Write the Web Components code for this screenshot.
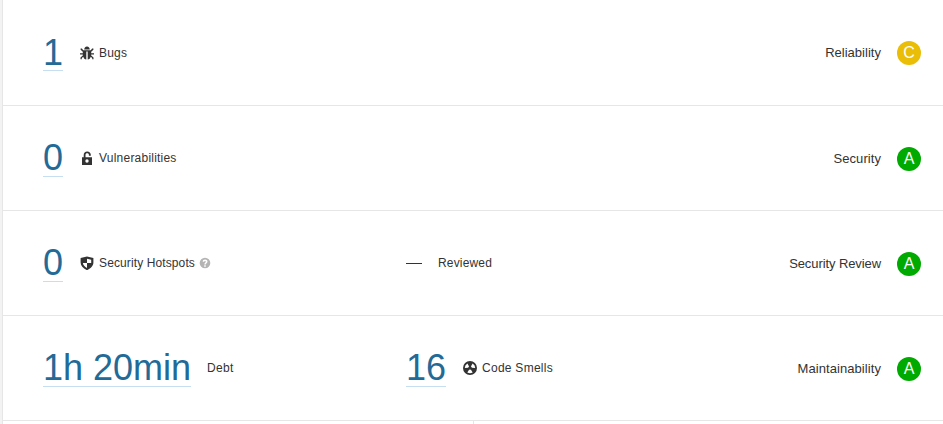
<!DOCTYPE html>
<html lang="en"><head><meta charset="utf-8"><title>Overview</title>
<style>html,body{margin:0;height:100%;overflow:hidden;background:#fff}body{font-family:"Liberation Sans",Arial,sans-serif;color:#333}</style></head>
<body><overview-panel></overview-panel>
<script>
const define=(name,markup)=>{const t=document.createElement('template');t.innerHTML=markup;
customElements.define(name,class extends HTMLElement{constructor(){super();this.attachShadow({mode:'open'}).append(t.content.cloneNode(true));}});};
const icons={
bug:'<path d="M4.2 3.6C4.2 1.7 5.3.4 7 .4s2.8 1.3 2.8 3.2zM.6 2.6h1.3l1.3 1.6h7.6l1.3-1.6h1.3v1.2l-2.2 2V7.2H14v1.2h-2.8v1.2l2.3 1.9v1.8h-1.3v-1.2l-1.5-1.3c-.4 1.5-1.4 2.6-3 2.8V5.4H6.3v8.2c-1.6-.2-2.6-1.3-3-2.8l-1.5 1.3v1.2H.5v-1.8l2.3-1.9V8.4H0V7.2h2.8V5.8l-2.2-2z"/>',
lock:'<path fill-rule="evenodd" d="M2 6.3h1.7V4c0-2.2 1.4-3.5 3.5-3.5S10.8 1.8 10.8 3.8v.9H8.9v-.8c0-1.1-.6-1.7-1.7-1.7s-1.7.6-1.7 1.8v2.3H12V14H2zM7 8.3a1.7 1.7 0 1 0 0 3.4 1.7 1.7 0 0 0 0-3.4z"/>',
shield:'<path fill-rule="evenodd" d="M7 .4 13.4 2v4.6c0 3.5-2.6 5.8-6.4 7.6C3.2 12.4.6 10.1.6 6.6V2zM7 2.8V7h4.2V3.7zM7 7H2.9c.2 2.3 1.8 3.7 4.1 4.9z"/>',
help:'<path fill-rule="evenodd" d="M7 .8a6.2 6.2 0 1 0 0 12.4A6.2 6.2 0 0 0 7 .8zM6.1 9.6h1.8v1.7H6.1zM4.3 5.6C4.4 3.8 5.4 2.9 7.1 2.9c1.6 0 2.8.9 2.8 2.4 0 1.9-2 2-2 3.5H6.2c0-2.2 1.8-2.2 1.8-3.3 0-.6-.4-.9-1-.9s-.9.4-1 1z"/>',
smell:'<path fill-rule="evenodd" d="M7 0a7 7 0 1 0 0 14A7 7 0 0 0 7 0zM4.4 2.5 6.1 5.5Q5.3 6 5.2 6.8L1.8 7Q1.7 4 4.4 2.5zM9.6 2.5Q12.3 4 12.2 7L8.8 6.8Q8.7 6 7.9 5.5zM6.2 8.4q.8.5 1.6 0l1.9 3Q7 12.9 4.3 11.4z"/>'};
customElements.define('metric-icon',class extends HTMLElement{connectedCallback(){const s=this.shadowRoot||this.attachShadow({mode:'open'});
s.innerHTML=`<style>:host{display:block;flex:none;width:var(--size,14px);height:var(--size,14px)}svg{display:block;width:100%;height:100%;fill:currentColor}</style><svg viewBox="0 0 14 14" aria-hidden="true">${icons[this.getAttribute('name')]}</svg>`;}});
define('metric-value',`<style>:host{display:block;flex:none;box-sizing:border-box;height:var(--value-height,38px);border-bottom:1px solid #c5dff0;color:#236a97;font-size:36px;line-height:38px;white-space:nowrap}</style><slot></slot>`);
define('metric-label',`<style>:host{display:flex;align-items:center;font-size:12px;line-height:16px;letter-spacing:var(--track,.17px);white-space:nowrap}::slotted(metric-icon){margin-right:5px}::slotted(.help){color:#b4b4b4;--size:12px;margin:0 0 0 4px}</style><slot></slot>`);
define('rating-badge',`<style>:host{display:block;width:24px;height:24px;border-radius:50%;text-align:center;color:#fff;background:var(--rating,#0a0);font-size:16px;line-height:24px;letter-spacing:0}</style><slot></slot>`);
define('measure-row',`<style>:host{display:grid;grid-template-columns:363px 1fr auto;box-sizing:border-box;height:var(--row-height,105px);padding:var(--row-top,33px) 22px 0 40px;border-bottom:1px solid #e6e6e6}
.cell{display:flex;align-items:flex-start;gap:17px}.cell ::slotted(metric-label){margin-top:11px}.rating{display:flex;gap:16px;align-items:center;height:24px;margin-top:var(--rating-top,8px);font-size:13px;line-height:24px;letter-spacing:var(--rating-track,.07px)}</style><div class="cell"><slot></slot></div><div class="cell"><slot name="middle"></slot></div><div class="rating"><slot name="rating"></slot></div>`);
define('overview-panel',`<style>:host{display:block;box-sizing:border-box;height:100%;padding-left:2px;background:#f3f3f3}main{height:100%;border-left:1px solid #e6e6e6;background:#fff;overflow:hidden}
.first{--row-height:106px;--row-top:34px;--value-height:37px;--rating-top:7px;--rating-track:.02px}.review{--track:.11px;--rating-track:-.09px}.reviewed{--track:.17px}.vulnerabilities{--track:.22px}.smells{--track:.26px}.debt{--track:.3px;margin-left:-1px}.c{--rating:#eabe06}.dash{width:16px;height:1px;background:#333;margin:19px -1px 0 0}.footer{display:grid;grid-template-columns:471px 1fr;height:3px}.footer i{border-right:1px solid #e6e6e6}</style><main>
<measure-row class="first"><metric-value>1</metric-value><metric-label><metric-icon name="bug"></metric-icon>Bugs</metric-label><span slot="rating">Reliability</span><rating-badge class="c" slot="rating">C</rating-badge></measure-row>
<measure-row><metric-value>0</metric-value><metric-label class="vulnerabilities"><metric-icon name="lock"></metric-icon>Vulnerabilities</metric-label><span slot="rating">Security</span><rating-badge slot="rating">A</rating-badge></measure-row>
<measure-row class="review"><metric-value>0</metric-value><metric-label><metric-icon name="shield"></metric-icon>Security Hotspots<metric-icon class="help" name="help"></metric-icon></metric-label><div class="dash" slot="middle"></div><metric-label class="reviewed" slot="middle">Reviewed</metric-label><span slot="rating">Security Review</span><rating-badge slot="rating">A</rating-badge></measure-row>
<measure-row><metric-value>1h 20min</metric-value><metric-label class="debt">Debt</metric-label><metric-value slot="middle">16</metric-value><metric-label class="smells" slot="middle"><metric-icon name="smell"></metric-icon>Code Smells</metric-label><span slot="rating">Maintainability</span><rating-badge slot="rating">A</rating-badge></measure-row>
<div class="footer"><i></i></div></main>`);
</script></body></html>
